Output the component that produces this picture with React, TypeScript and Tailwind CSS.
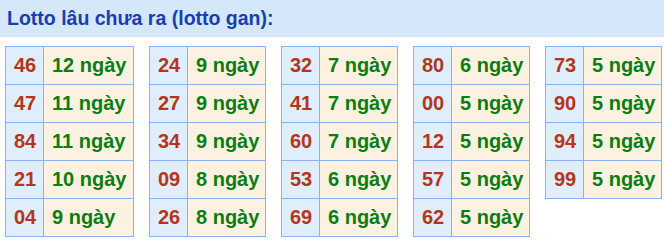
const tables: { w: string; rows: [string, string][] }[] = [
  {
    w: 'w-[90px]',
    rows: [
      ['46', '12 ngày'],
      ['47', '11 ngày'],
      ['84', '11 ngày'],
      ['21', '10 ngày'],
      ['04', '9 ngày'],
    ],
  },
  {
    w: 'w-[78px]',
    rows: [
      ['24', '9 ngày'],
      ['27', '9 ngày'],
      ['34', '9 ngày'],
      ['09', '8 ngày'],
      ['26', '8 ngày'],
    ],
  },
  {
    w: 'w-[78px]',
    rows: [
      ['32', '7 ngày'],
      ['41', '7 ngày'],
      ['60', '7 ngày'],
      ['53', '6 ngày'],
      ['69', '6 ngày'],
    ],
  },
  {
    w: 'w-[78px]',
    rows: [
      ['80', '6 ngày'],
      ['00', '5 ngày'],
      ['12', '5 ngày'],
      ['57', '5 ngày'],
      ['62', '5 ngày'],
    ],
  },
  {
    w: 'w-[78px]',
    rows: [
      ['73', '5 ngày'],
      ['90', '5 ngày'],
      ['94', '5 ngày'],
      ['99', '5 ngày'],
    ],
  },
];

function GanTable({ w, rows }: { w: string; rows: [string, string][] }) {
  return (
    <table className="border-collapse border border-[#8ab0f5]">
      <tbody>
        {rows.map(([num, days]) => (
          <tr key={num} className="h-[38px]">
            <td className="w-[38px] border border-[#8ab0f5] bg-[#e0edfd] pl-[8px] text-[#b5351a] p-0">{num}</td>
            <td className={`${w} border border-[#8ab0f5] bg-[#fdf2e1] pl-[8px] text-[#0b7d12] p-0`}>{days}</td>
          </tr>
        ))}
      </tbody>
    </table>
  );
}

export default function App() {
  return (
    <div className="w-[664px] h-[241px] bg-white font-['Liberation_Sans',Arial,sans-serif]">
      <div className="h-[37px] bg-[#d5e7fb] pl-[7px] flex items-center">
        <h2 className="text-[19.5px] font-bold text-[#1640b2] leading-none">Lotto lâu chưa ra (lotto gan):</h2>
      </div>
      <div className="flex items-start gap-[15px] pl-[5px] pt-[9px] text-[20px] font-bold leading-[23px]">
        {tables.map((t, i) => (
          <GanTable key={i} w={t.w} rows={t.rows} />
        ))}
      </div>
    </div>
  );
}
